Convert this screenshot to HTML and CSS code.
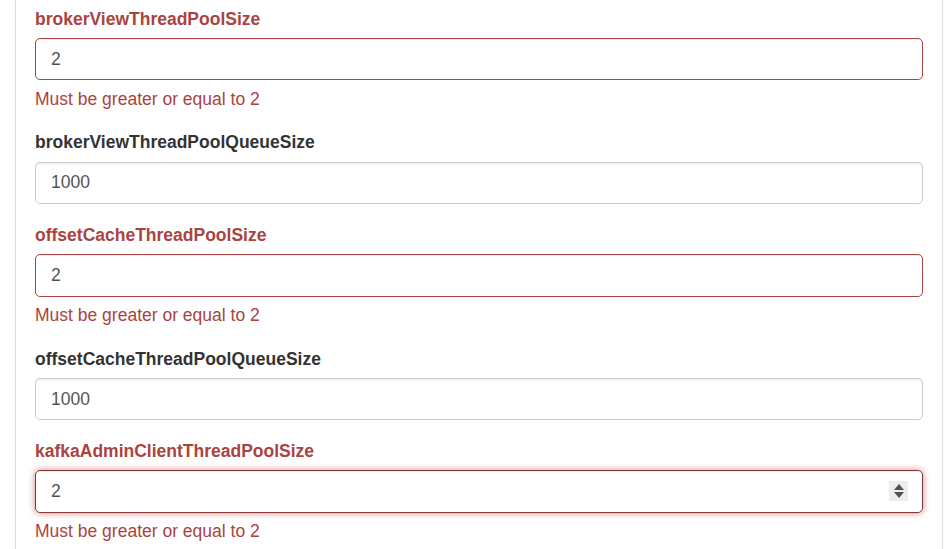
FILE: index.html
```html
<!DOCTYPE html>
<html>
<head>
<meta charset="utf-8">
<link rel="stylesheet" href="styles.css">
</head>
<body>
<div class="panel">
  <div class="group error">
    <label class="lbl">brokerViewThreadPoolSize</label>
    <div class="field"><span class="val">2</span></div>
    <div class="help">Must be greater or equal to 2</div>
  </div>
  <div class="group">
    <label class="lbl">brokerViewThreadPoolQueueSize</label>
    <div class="field"><span class="val">1000</span></div>
  </div>
  <div class="group error">
    <label class="lbl">offsetCacheThreadPoolSize</label>
    <div class="field"><span class="val">2</span></div>
    <div class="help">Must be greater or equal to 2</div>
  </div>
  <div class="group">
    <label class="lbl">offsetCacheThreadPoolQueueSize</label>
    <div class="field"><span class="val">1000</span></div>
  </div>
  <div class="group error">
    <label class="lbl">kafkaAdminClientThreadPoolSize</label>
    <div class="field focus"><span class="val">2</span>
      <span class="spin"><span class="up"></span><span class="down"></span></span>
    </div>
    <div class="help">Must be greater or equal to 2</div>
  </div>
</div>
</body>
</html>
```
FILE: styles.css
```css
html, body {
  margin: 0;
  padding: 0;
  background: #fff;
  font-family: "Liberation Sans", Arial, sans-serif;
  font-size: 17.5px;
  color: #333;
  overflow: hidden;
}
.panel {
  margin-left: 15px;
  width: 928px;
  border-left: 1px solid #ddd;
  border-right: 1px solid #ddd;
  padding: 6.5px 19px 0 19px;
  box-sizing: border-box;
  height: 549px;
}
.group {
  margin-bottom: 18.75px;
}
.lbl {
  display: block;
  font-weight: bold;
  line-height: 25px;
  margin-bottom: 6.25px;
  color: #333;
}
.field {
  position: relative;
  height: 42.5px;
  box-sizing: border-box;
  border: 1.25px solid #ccc;
  border-radius: 5px;
  padding: 0 15px;
  display: flex;
  align-items: center;
  color: #555;
  box-shadow: inset 0 1px 1px rgba(0,0,0,.075);
}
.error .lbl { color: #a94442; }
.error .field { border-color: #a94442; }
.error .field.focus {
  border-color: #843534;
  box-shadow: inset 0 1px 1px rgba(0,0,0,.075), 0 0 7px #ce8483;
}
.help {
  color: #a94442;
  line-height: 25px;
  margin-top: 6.25px;
}
.spin {
  position: absolute;
  right: 14px;
  top: 10px;
  width: 19px;
  height: 20px;
  background: #ededed;
  display: flex;
  flex-direction: column;
  align-items: center;
  justify-content: center;
  gap: 2px;
}
.up, .down {
  width: 0;
  height: 0;
  border-left: 5px solid transparent;
  border-right: 5px solid transparent;
}
.up { border-bottom: 6px solid #505050; }
.down { border-top: 6px solid #505050; }
```
